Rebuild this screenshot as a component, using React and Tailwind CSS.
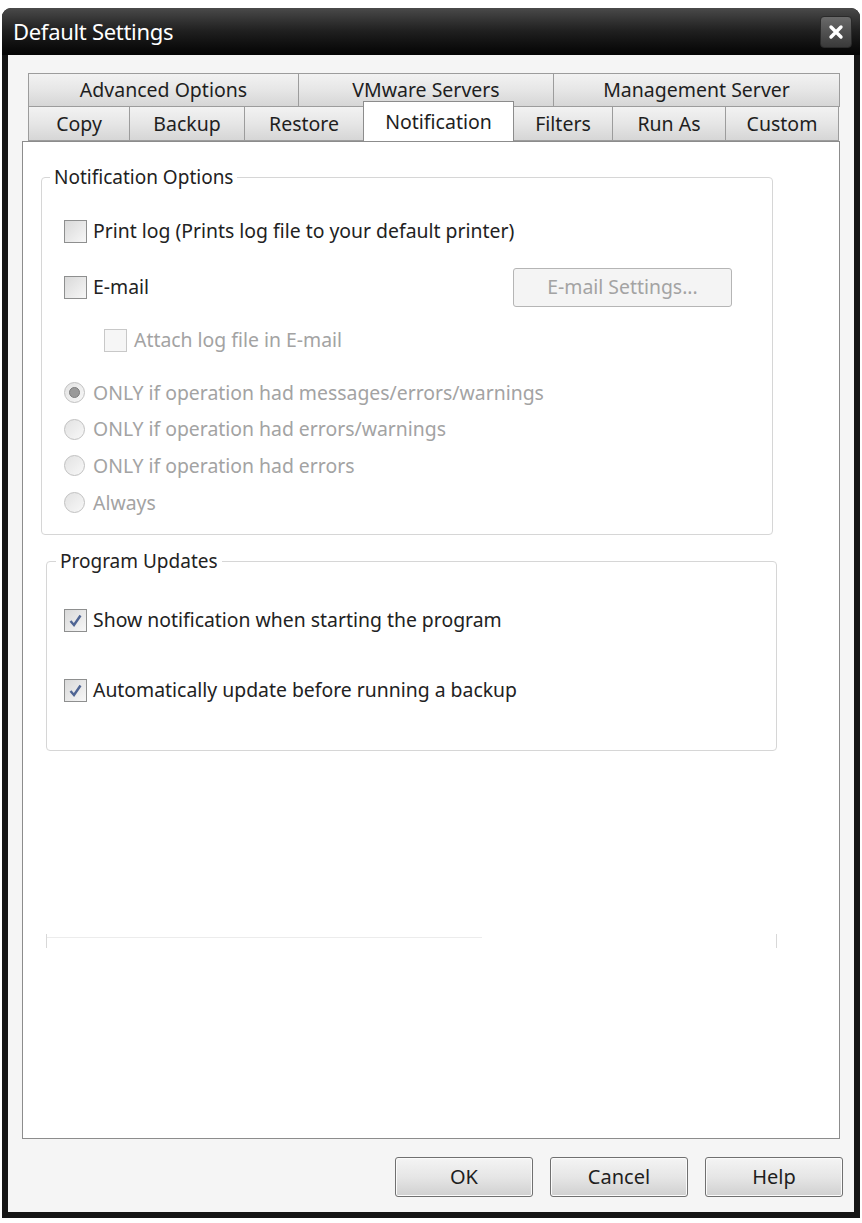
import React from 'react';

const font = { fontFamily: '"Noto Sans", "Liberation Sans", sans-serif' };

function CheckBox({ checked, disabled }) {
  return (
    <span className={`inline-flex shrink-0 items-center justify-center w-[23px] h-[23px] border ${disabled ? 'border-[#c8c8c8] bg-[#f6f6f6]' : 'border-[#8e8f8f] bg-gradient-to-br from-[#d9d9d9] to-[#f7f7f7]'}`}>
      {checked && (
        <svg width="15" height="15" viewBox="0 0 15 15">
          <path d="M2.5 8 L6 12 L12.5 2.5" fill="none" stroke="#4f6594" strokeWidth="2.4" />
        </svg>
      )}
    </span>
  );
}

function Radio({ selected }) {
  return (
    <span className="inline-flex shrink-0 items-center justify-center w-[21px] h-[21px] rounded-full border border-[#c0c0c0] bg-gradient-to-br from-[#e2e2e2] to-[#f8f8f8]">
      {selected && <span className="w-[11px] h-[11px] rounded-full bg-[#9a9a9a] border border-[#7d7d7d]" />}
    </span>
  );
}

function Tab({ label, w, selected }) {
  if (selected) {
    return (
      <div className={`${w} h-[40px] -mt-[5px] -mb-[1px] relative z-10 bg-white border border-b-0 border-[#8c8c8c] flex items-start justify-center pt-[5px] text-[19.5px] text-[#1e1e1e]`}>
        {label}
      </div>
    );
  }
  return (
    <div className={`${w} h-full bg-gradient-to-b from-[#f2f2f2] via-[#e6e6e6] to-[#d6d6d6] border border-[#9c9c9c] -ml-[1px] flex items-center justify-center text-[19.5px] text-[#1e1e1e]`}>
      {label}
    </div>
  );
}

function Button({ children }) {
  return (
    <div className="w-[138px] h-[40px] rounded-[3px] border border-[#707070] bg-gradient-to-b from-[#f4f4f4] via-[#e6e6e6] to-[#d0d0d0] flex items-center justify-center text-[20px] text-[#1e1e1e] shadow-[inset_0_0_0_1px_#fbfbfb]">
      {children}
    </div>
  );
}

export default function App() {
  return (
    <div className="w-[862px] h-[1223px] bg-white pt-[8px] px-[2px] pb-[5px]" style={font}>
      <div className="h-full rounded-t-[9px] bg-[#151515] flex flex-col overflow-hidden">
        {/* title bar */}
        <div className="h-[47px] shrink-0 bg-gradient-to-b from-[#4a4a4a] via-[#1f1f1f] to-[#050505] flex items-center justify-between pl-[11px] pr-[8px]">
          <span className="text-white text-[22px] tracking-[-0.3px]">Default Settings</span>
          <div className="w-[32px] h-[32px] rounded-[4px] bg-gradient-to-b from-[#6a6a6a] to-[#3a3a3a] border border-[#2a2a2a] flex items-center justify-center">
            <svg width="16" height="16" viewBox="0 0 16 16">
              <path d="M3 3 L13 13 M13 3 L3 13" stroke="white" strokeWidth="3.4" strokeLinecap="round" />
            </svg>
          </div>
        </div>

        {/* body */}
        <div className="flex-1 mx-[6px] mb-[6px] bg-[#f5f5f5] flex flex-col pt-[18px] px-[14px]">
          {/* tabs */}
          <div className="ml-[5px] flex flex-col">
            <div className="flex h-[34px]">
              <Tab label="Advanced Options" w="w-[271px] ml-[1px]" />
              <Tab label="VMware Servers" w="w-[256px]" />
              <Tab label="Management Server" w="w-[287px]" />
            </div>
            <div className="flex h-[35px] -mt-[1px] items-stretch">
              <Tab label="Copy" w="w-[102px] ml-[1px]" />
              <Tab label="Backup" w="w-[116px]" />
              <Tab label="Restore" w="w-[120px]" />
              <Tab label="Notification" w="w-[151px] -ml-[1px]" selected />
              <Tab label="Filters" w="w-[100px]" />
              <Tab label="Run As" w="w-[114px]" />
              <Tab label="Custom" w="w-[114px]" />
            </div>
          </div>

          {/* panel */}
          <div className="h-[998px] bg-white border border-[#8c8c8c] flex flex-col text-[19.4px] text-[#222]">
            <fieldset className="ml-[18px] mt-[22px] w-[732px] h-[371px] border border-[#d6d6d6] rounded-[4px]">
              <legend className="ml-[8px] px-[4px] text-[19px] leading-[27px] text-[#222]">Notification Options</legend>
              <div className="px-[22px]">
                <div className="flex items-center gap-[6px] mt-[28px] h-[24px]">
                  <CheckBox />
                  <span>Print log (Prints log file to your default printer)</span>
                </div>
                <div className="flex items-center mt-[24px] h-[40px]">
                  <CheckBox />
                  <span className="ml-[6px]">E-mail</span>
                  <div className="ml-auto mr-[18px] w-[219px] h-[39px] rounded-[3px] border border-[#b5b5b5] bg-[#f4f4f4] flex items-center justify-center text-[#a3a3a3]">
                    E-mail Settings...
                  </div>
                </div>
                <div className="flex items-center gap-[7px] mt-[21px] ml-[40px] h-[24px] text-[#a3a3a3]">
                  <CheckBox disabled />
                  <span>Attach log file in E-mail</span>
                </div>
                <div className="flex flex-col mt-[22px] text-[#a3a3a3]">
                  {[
                    ['ONLY if operation had messages/errors/warnings', true],
                    ['ONLY if operation had errors/warnings'],
                    ['ONLY if operation had errors'],
                    ['Always'],
                  ].map(([t, s]) => (
                    <div key={t} className="flex items-center gap-[8px] h-[36.7px]">
                      <Radio selected={s} />
                      <span>{t}</span>
                    </div>
                  ))}
                </div>
              </div>
            </fieldset>

            <fieldset className="ml-[23px] mt-[13px] w-[731px] h-[203px] border border-[#d6d6d6] rounded-[4px]">
              <legend className="ml-[9px] px-[4px] text-[19px] leading-[27px] text-[#222]">Program Updates</legend>
              <div className="px-[17px]">
                <div className="flex items-center gap-[6px] mt-[33px] h-[24px]">
                  <CheckBox checked />
                  <span>Show notification when starting the program</span>
                </div>
                <div className="flex items-center gap-[6px] mt-[46px] h-[24px]">
                  <CheckBox checked />
                  <span>Automatically update before running a backup</span>
                </div>
              </div>
            </fieldset>

            {/* faint leftover line */}
            <div className="ml-[23px] mt-[183px] w-[731px] h-[14px] border-x border-[#d8d8d8] flex">
              <div className="w-[435px] h-[1px] mt-[3px] bg-[#ececec]" />
            </div>
          </div>

          {/* buttons */}
          <div className="flex justify-end gap-[17px] mt-[18px] -mr-[3px]">
            <Button>OK</Button>
            <Button>Cancel</Button>
            <Button>Help</Button>
          </div>
        </div>
      </div>
    </div>
  );
}
